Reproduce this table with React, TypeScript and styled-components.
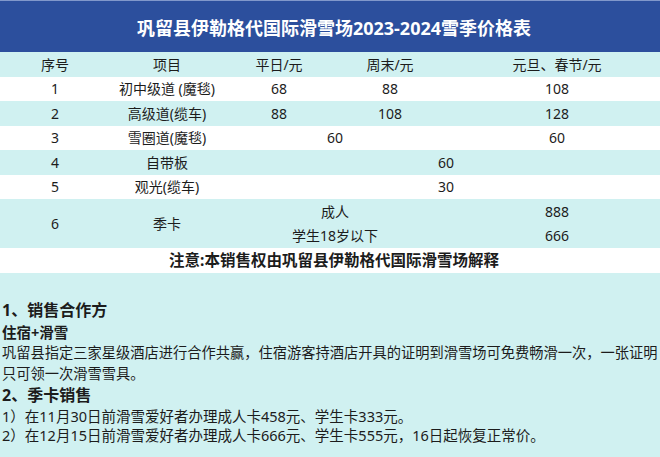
import {FC} from "react";
import {createGlobalStyle, styled} from "styled-components";

const GlobalStyle = createGlobalStyle`
    html, body {
        margin: 0;
        padding: 0;
        overflow: hidden;
        background-color: #d0f1f1;
    }

    body {
        font-family: "Noto Sans", "Noto Sans CJK SC", sans-serif;
        color: #1c1c1c;
    }
`

const Sheet = styled.div`
    width: 668px;
    display: flex;
    flex-direction: column;
`

const TitleBar = styled.div`
    height: 52px;
    box-sizing: border-box;
    border-top: 1px solid #8198cb;
    padding-top: 1px;
    background-color: #2c4f9d;
    color: #fff;
    font-size: 18px;
    font-weight: 700;
    display: flex;
    align-items: center;
    justify-content: center;
`

const PriceTable = styled.table`
    width: 668px;
    border-collapse: collapse;
    table-layout: fixed;
    font-size: 14px;

    td {
        padding: 0;
        text-align: center;
        vertical-align: middle;
        line-height: 18px;
        white-space: nowrap;
    }
`

const Row = styled.tr<{ $shade?: boolean }>`
    height: 24.5px;
    background-color: ${({$shade}) => ($shade ? "#d0f1f1" : "#fff")};

    td {
        padding-top: ${({$shade}) => ($shade ? "1px" : "0")};
    }
`

const NoteCell = styled.td`
    font-size: 15.5px;
    font-weight: 700;
`

const Notes = styled.section`
    background-color: #d0f1f1;
    padding: 26px 0 0 2px;
    display: flex;
    flex-direction: column;
    width: 658px;
`

const Heading = styled.h3`
    margin: 0;
    font-size: 16px;
    font-weight: 700;
    line-height: 22px;
`

const SubHeading = styled.h4`
    margin: 1px 0 0;
    font-size: 14.5px;
    font-weight: 700;
    line-height: 20px;
`

const Paragraph = styled.p`
    margin: 0;
    font-size: 14.25px;
    line-height: 21px;
`

const Item = styled.p<{ $first?: boolean }>`
    margin: ${({$first}) => ($first ? "1px" : "0")} 0 0;
    font-size: 14.5px;
    line-height: 19px;
    white-space: nowrap;
`

const App: FC = () => {
    return (
        <>
            <GlobalStyle/>
            <Sheet>
                <TitleBar>巩留县伊勒格代国际滑雪场2023-2024雪季价格表</TitleBar>
                <PriceTable>
                    <colgroup>
                        <col style={{width: 110}}/>
                        <col style={{width: 114}}/>
                        <col style={{width: 110}}/>
                        <col style={{width: 112}}/>
                        <col style={{width: 222}}/>
                    </colgroup>
                    <tbody>
                    <Row $shade>
                        <td>序号</td>
                        <td>项目</td>
                        <td>平日/元</td>
                        <td>周末/元</td>
                        <td>元旦、春节/元</td>
                    </Row>
                    <Row>
                        <td>1</td>
                        <td>初中级道 (魔毯)</td>
                        <td>68</td>
                        <td>88</td>
                        <td>108</td>
                    </Row>
                    <Row $shade>
                        <td>2</td>
                        <td>高级道(缆车)</td>
                        <td>88</td>
                        <td>108</td>
                        <td>128</td>
                    </Row>
                    <Row>
                        <td>3</td>
                        <td>雪圈道(魔毯)</td>
                        <td colSpan={2}>60</td>
                        <td>60</td>
                    </Row>
                    <Row $shade>
                        <td>4</td>
                        <td>自带板</td>
                        <td colSpan={3}>60</td>
                    </Row>
                    <Row>
                        <td>5</td>
                        <td>观光(缆车)</td>
                        <td colSpan={3}>30</td>
                    </Row>
                    <Row $shade>
                        <td rowSpan={2}>6</td>
                        <td rowSpan={2}>季卡</td>
                        <td colSpan={2}>成人</td>
                        <td>888</td>
                    </Row>
                    <Row $shade>
                        <td colSpan={2}>学生18岁以下</td>
                        <td>666</td>
                    </Row>
                    <Row>
                        <NoteCell colSpan={5}>注意:本销售权由巩留县伊勒格代国际滑雪场解释</NoteCell>
                    </Row>
                    </tbody>
                </PriceTable>
                <Notes>
                    <Heading>1、销售合作方</Heading>
                    <SubHeading>住宿+滑雪</SubHeading>
                    <Paragraph>
                        巩留县指定三家星级酒店进行合作共赢，住宿游客持酒店开具的证明到滑雪场可免费畅滑一次，一张证明只可领一次滑雪雪具。
                    </Paragraph>
                    <Heading>2、季卡销售</Heading>
                    <Item $first>1）在11月30日前滑雪爱好者办理成人卡458元、学生卡333元。</Item>
                    <Item>2）在12月15日前滑雪爱好者办理成人卡666元、学生卡555元，16日起恢复正常价。</Item>
                </Notes>
            </Sheet>
        </>
    )
}

export default App
